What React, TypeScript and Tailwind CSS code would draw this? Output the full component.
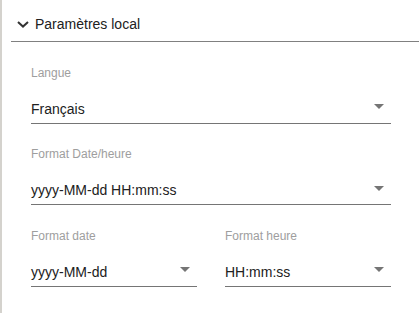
import { ReactNode } from "react";

const ExpandIcon = () => (
  <svg viewBox="0 0 12 7" className="ml-[6px] mr-[6px] mt-[7px] h-[7px] w-[12px] shrink-0" fill="none" stroke="#333333" strokeWidth="2">
    <path d="M1 1l5 4.6L11 1" />
  </svg>
);

const Arrow = () => (
  <svg viewBox="7 10 10 5" className="absolute right-[7px] top-[5.5px] h-[5px] w-[10px]" fill="#757575">
    <path d="M7 10l5 5 5-5z" />
  </svg>
);

const SelectField = ({ label, value, className = "" }: { label: string; value: ReactNode; className?: string }) => (
  <div className={className}>
    <div className="text-[12px] leading-[14px] text-[#9e9e9e]">{label}</div>
    <div className="relative mt-[19px] border-b border-[#757575] pb-[4px]">
      <div className="pr-6 text-[14px] leading-[20px] text-[#212121]">{value}</div>
      <Arrow />
    </div>
  </div>
);

export default function App() {
  return (
    <div
      className="h-[313px] w-[419px] overflow-hidden border-l-2 border-[#d4d2cd] bg-white"
      style={{ fontFamily: '"Liberation Sans", Arial, sans-serif' }}
    >
      <div className="ml-[9px] flex items-start border-b border-[#808080] pt-[14px] pb-[7px]">
        <ExpandIcon />
        <span className="text-[14px] leading-[20px] text-[#212121]">Paramètres local</span>
      </div>

      <div className="pl-[29px] pr-[28px] pt-[23.5px]">
        <SelectField label="Langue" value="Français" />
        <SelectField label="Format Date/heure" value="yyyy-MM-dd HH:mm:ss" className="mt-[23.5px]" />
        <div className="mt-[23.5px] grid grid-cols-2 gap-x-[28px]">
          <SelectField label="Format date" value="yyyy-MM-dd" />
          <SelectField label="Format heure" value="HH:mm:ss" />
        </div>
      </div>
    </div>
  );
}
